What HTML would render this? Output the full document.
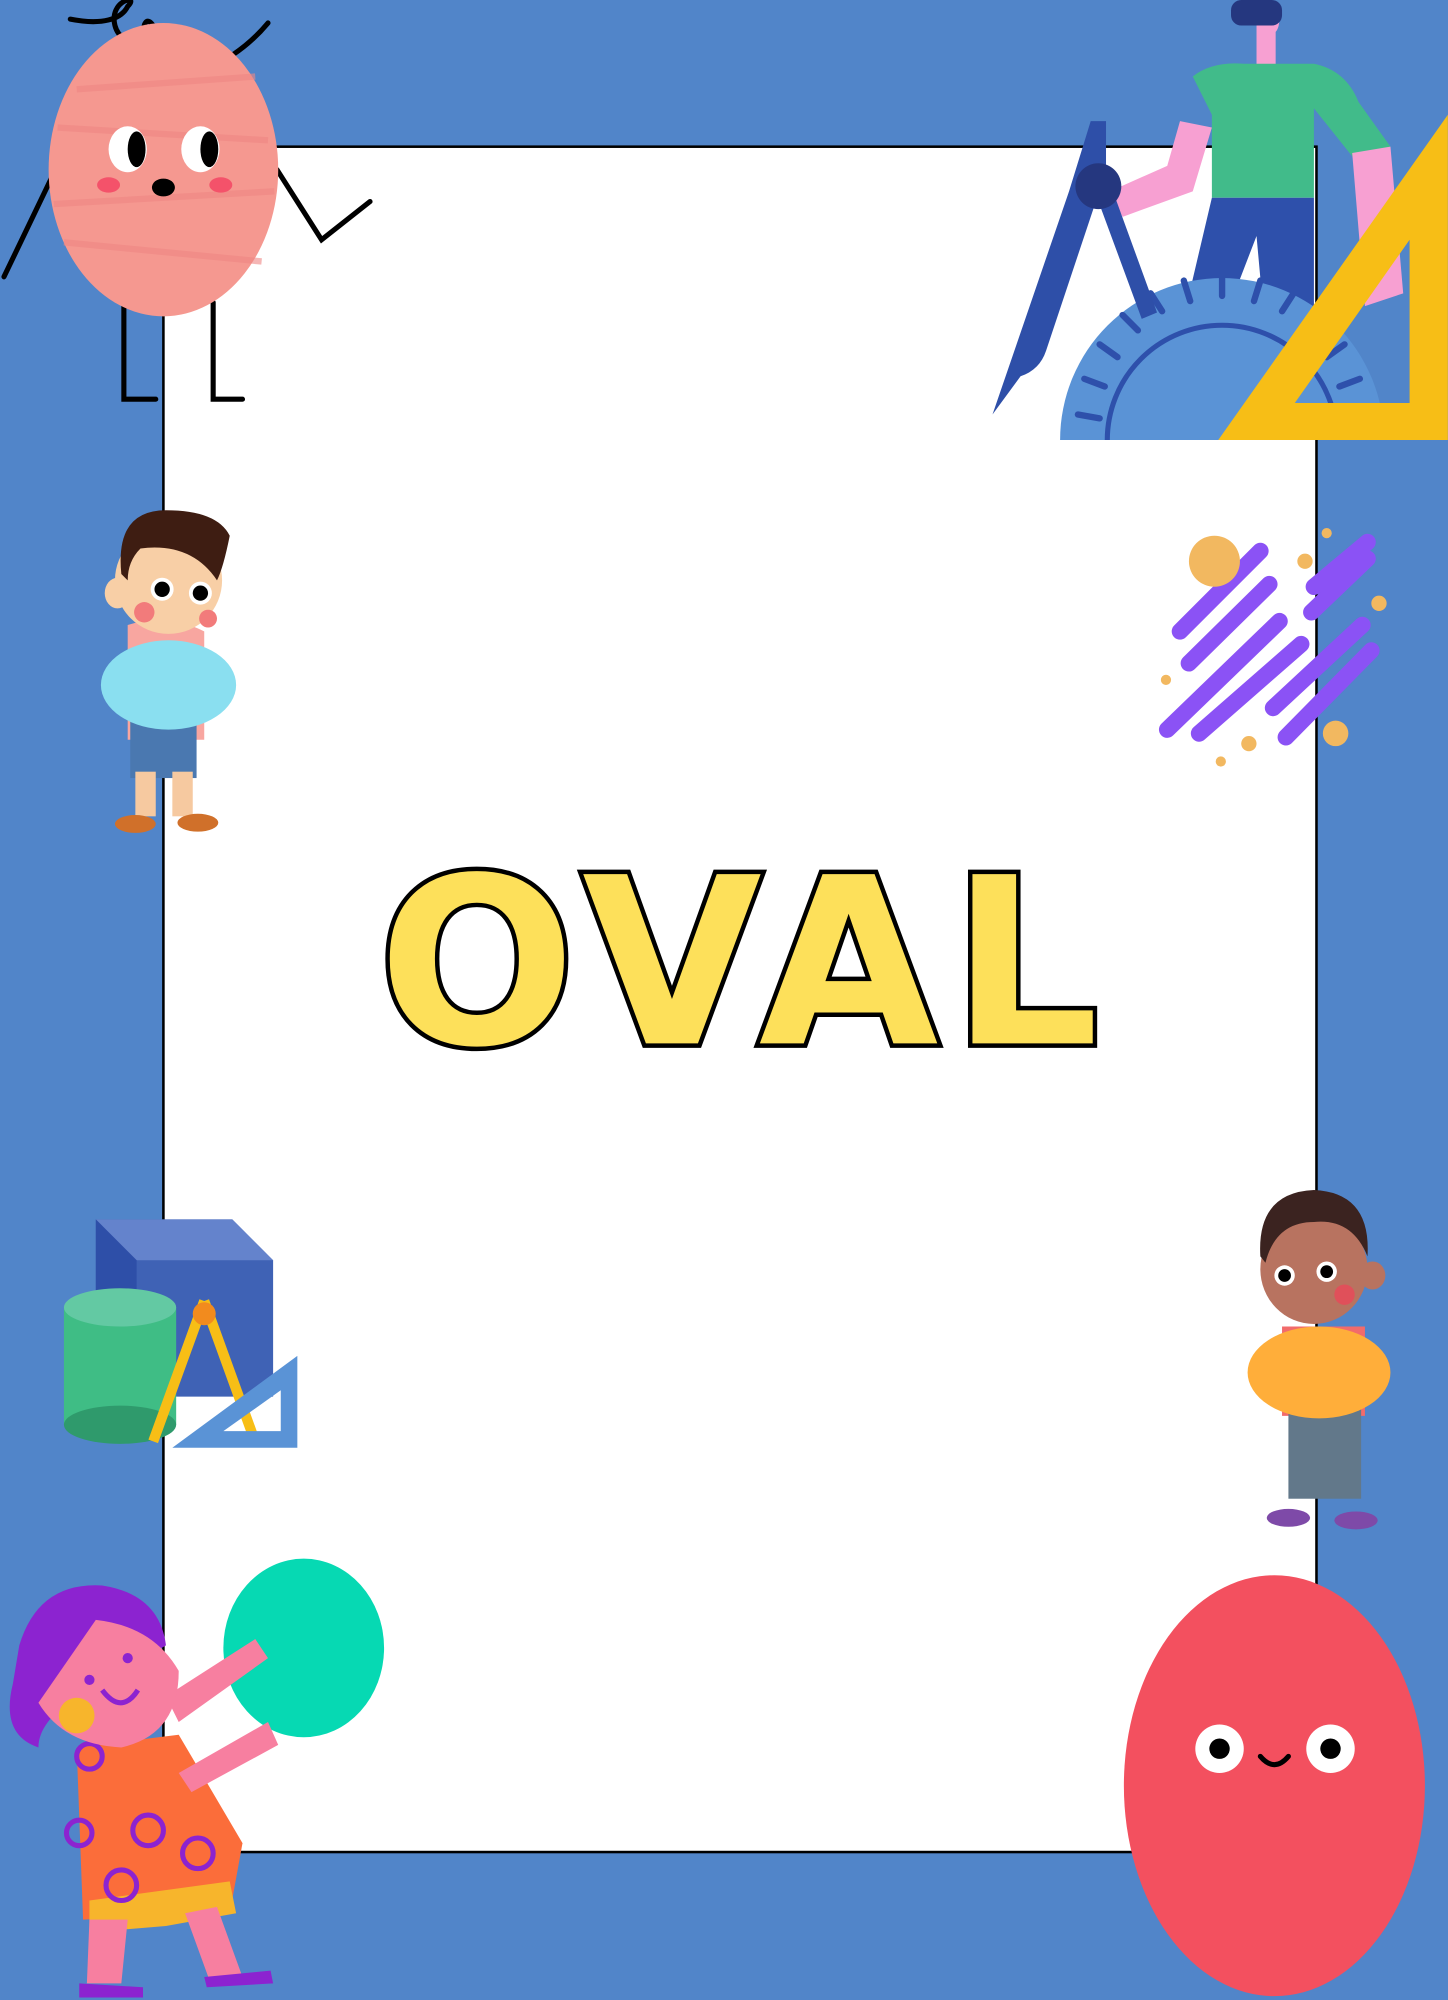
<!DOCTYPE html>
<html><head><meta charset="utf-8"><style>
html,body{margin:0;padding:0;background:#5185c9;}
svg{display:block;width:1448px;height:2000px;}
</style></head><body>
<svg viewBox="0 0 1135 1568" xmlns="http://www.w3.org/2000/svg">
<rect width="1135" height="1568" fill="#5185c9"/>
<rect x="128" y="115" width="904" height="1337" fill="#fff" stroke="#000" stroke-width="2"/>

<g stroke="#000" stroke-width="4" fill="none" stroke-linecap="round">
<path d="M40 140 L3 217"/><path d="M217 133 L252 188 L290 158"/>
<path d="M97 237 V313 H122"/><path d="M167 237 V313 H190"/>
<path d="M55 15 C80 20 95 15 100 5 C110 -5 85 0 90 20 C95 40 130 40 120 20 C110 5 105 45 140 55 C170 60 200 30 210 18"/>
</g>
<ellipse cx="128" cy="133" rx="90" ry="115" fill="#f59890"/>
<g stroke="#ef8784" stroke-width="5" opacity=".6"><path d="M45 100 L210 110 M42 160 L215 150 M50 190 L205 205 M60 70 L200 60"/></g>
<ellipse cx="100" cy="117" rx="15" ry="18" fill="#fff"/><ellipse cx="157" cy="117" rx="15" ry="18" fill="#fff"/>
<ellipse cx="107" cy="117" rx="7" ry="14" fill="#000"/><ellipse cx="164" cy="117" rx="7" ry="14" fill="#000"/>
<ellipse cx="128" cy="147" rx="9" ry="7" fill="#000"/>
<ellipse cx="85" cy="145" rx="9" ry="6" fill="#f4526a"/><ellipse cx="173" cy="145" rx="9" ry="6" fill="#f4526a"/>

<path d="M985 0 C1005 0 1005 20 1000 25 L1000 55 L985 55 Z" fill="#f7a0d2"/>
<rect x="965" y="0" width="40" height="20" rx="8" fill="#25377f"/>
<path d="M935 60 Q950 48 975 50 L1030 50 Q1055 55 1065 80 L1090 115 L1070 135 L1030 85 L1030 155 L950 155 L950 90 Z" fill="#41bb8a"/>
<path d="M1060 120 L1090 115 L1100 230 L1070 240 Z" fill="#f7a0d2"/>
<path d="M925 95 L950 100 L935 150 L880 170 L870 150 L915 130 Z" fill="#f7a0d2"/>
<path d="M950 155 L1030 155 L1030 240 L990 240 L985 185 L960 250 L930 240 Z" fill="#2e50ab"/>
<path d="M831 345 A127 127 0 0 1 1085 345 Z" fill="#5a93d6"/>
<path d="M868 345 A90 90 0 0 1 1048 345" fill="none" stroke="#2e50ab" stroke-width="4"/>
<g stroke="#2e50ab" stroke-width="5" stroke-linecap="round"><path d="M845 325 L862 328 M850 297 L866 303 M862 270 L876 280 M880 247 L892 259 M902 230 L911 244 M928 220 L933 236 M958 216 L958 232 M988 220 L983 236 M1014 230 L1005 244 M1036 247 L1024 259 M1054 270 L1040 280 M1066 297 L1050 303"/></g>
<path d="M855 95 h12 v40 l40 110 l-12 5 l-35 -95 l-40 120 q-5 15 -20 20 l-22 30 l60 -175 Z" fill="#2e4fa8"/>
<circle cx="861" cy="146" r="18" fill="#25377f"/>
<path d="M955 345 L1135 90 L1135 345 Z M1015 316 L1105 316 L1105 188 Z" fill="#f7be16" fill-rule="evenodd"/>

<path d="M100 490 Q130 480 160 495 L160 580 L100 580 Z" fill="#f8a6a0"/>
<rect x="102" y="565" width="52" height="45" fill="#4a78b0"/>
<rect x="106" y="605" width="16" height="35" fill="#f6c9a0"/><rect x="135" y="605" width="16" height="35" fill="#f6c9a0"/>
<ellipse cx="106" cy="646" rx="16" ry="7" fill="#d0702a"/><ellipse cx="155" cy="645" rx="16" ry="7" fill="#d0702a"/>
<ellipse cx="132" cy="455" rx="42" ry="42" fill="#f8cfa6"/>
<ellipse cx="92" cy="465" rx="10" ry="12" fill="#f8cfa6"/>
<path d="M95 450 Q90 400 130 400 Q170 400 180 420 Q175 445 170 455 Q150 425 110 430 Q100 440 100 455 Z" fill="#3e1d12"/>
<circle cx="127" cy="462" r="9" fill="#fff"/><circle cx="157" cy="465" r="9" fill="#fff"/>
<circle cx="127" cy="462" r="6" fill="#000"/><circle cx="157" cy="465" r="6" fill="#000"/>
<circle cx="113" cy="480" r="8" fill="#f27b7b"/><circle cx="163" cy="485" r="7" fill="#f27b7b"/>
<ellipse cx="132" cy="537" rx="53" ry="35" fill="#8adff0"/>

<g stroke="#8b52f5" stroke-width="13" stroke-linecap="round">
<path d="M925 495 L988 432 M932 520 L995 458 M915 572 L1003 487 M940 575 L1020 505 M1008 578 L1075 510 M998 555 L1068 490 M1028 480 L1072 438 M1030 460 L1072 425"/>
</g>
<g fill="#f2b860"><circle cx="952" cy="440" r="20"/><circle cx="1023" cy="440" r="6"/><circle cx="1040" cy="418" r="4"/><circle cx="1081" cy="473" r="6"/><circle cx="1047" cy="575" r="10"/><circle cx="979" cy="583" r="6"/><circle cx="957" cy="597" r="4"/><circle cx="914" cy="533" r="4"/></g>

<text x="584" y="818" text-anchor="middle" font-family="DejaVu Sans, sans-serif" font-weight="bold" font-size="182" letter-spacing="10" fill="#fde05a" stroke="#000" stroke-width="7" paint-order="stroke" stroke-linejoin="miter">OVAL</text>

<path d="M75 956 L182 956 L214 988 L214 1095 L107 1095 L75 1063 Z" fill="#3f62b5"/>
<path d="M75 956 L182 956 L214 988 L107 988 Z" fill="#6483cc"/>
<path d="M75 956 L107 988 L107 1095 L75 1063 Z" fill="#2e4fa8"/>
<rect x="50" y="1025" width="88" height="92" fill="#3fbd85"/>
<ellipse cx="94" cy="1117" rx="44" ry="15" fill="#2f9a6c"/>
<ellipse cx="94" cy="1025" rx="44" ry="15" fill="#63c9a3"/>
<path d="M160 1020 L120 1130 M160 1020 L198 1125" stroke="#f7be16" stroke-width="8"/>
<circle cx="160" cy="1030" r="9" fill="#f28b1e"/>
<path d="M135 1135 L233 1063 L233 1135 Z M175 1122 L220 1122 L220 1090 Z" fill="#5a93d6" fill-rule="evenodd"/>

<path d="M1005 1040 L1070 1040 L1070 1110 L1005 1110 Z" fill="#f26b6b"/>
<rect x="1010" y="1100" width="57" height="75" fill="#62788a"/>
<ellipse cx="1010" cy="1190" rx="17" ry="7" fill="#7e4aa8"/><ellipse cx="1063" cy="1192" rx="17" ry="7" fill="#7e4aa8"/>
<ellipse cx="1030" cy="995" rx="42" ry="43" fill="#b87360"/>
<ellipse cx="1076" cy="1000" rx="10" ry="11" fill="#b87360"/>
<path d="M988 985 Q985 935 1030 933 Q1075 935 1072 985 Q1060 955 1030 958 Q1000 958 992 990 Z" fill="#3b2320"/>
<circle cx="1007" cy="1000" r="8" fill="#fff"/><circle cx="1040" cy="997" r="8" fill="#fff"/>
<circle cx="1007" cy="1000" r="5" fill="#000"/><circle cx="1040" cy="997" r="5" fill="#000"/>
<circle cx="1054" cy="1015" r="8" fill="#e0505a"/>
<ellipse cx="1034" cy="1076" rx="56" ry="36" fill="#ffae3a"/>

<ellipse cx="238" cy="1292" rx="63" ry="70" fill="#06d9b3"/>
<path d="M60 1370 L140 1360 L190 1445 L180 1500 L65 1505 Z" fill="#fb6d3a"/>
<path d="M70 1490 L180 1475 L185 1500 L130 1510 L70 1515 Z" fill="#f7b52c"/>
<path d="M70 1505 L100 1505 L95 1555 L68 1555 Z M145 1500 L170 1495 L190 1550 L165 1555 Z" fill="#f77fa0"/>
<path d="M62 1555 L112 1558 L112 1566 L62 1566 Z M160 1550 L212 1545 L214 1555 L162 1558 Z" fill="#8c23d0"/>
<path d="M130 1330 L200 1285 L210 1300 L140 1350 Z M140 1390 L210 1350 L218 1368 L150 1405 Z" fill="#f77fa0"/>
<g fill="none" stroke="#8c23d0" stroke-width="4"><circle cx="116" cy="1435" r="12"/><circle cx="155" cy="1453" r="12"/><circle cx="95" cy="1478" r="12"/><circle cx="62" cy="1437" r="10"/><circle cx="70" cy="1377" r="10"/></g>
<path d="M15 1290 Q30 1240 80 1243 Q125 1250 130 1290 L60 1330 Q30 1350 30 1370 Q0 1360 10 1320 Z" fill="#8c23d0"/>
<path d="M30 1335 L75 1270 Q120 1275 140 1310 Q140 1360 95 1370 Q50 1368 30 1335 Z" fill="#f77fa0"/>
<circle cx="60" cy="1345" r="14" fill="#f7b52c"/>
<path d="M80 1325 Q95 1345 108 1325" fill="none" stroke="#8c23d0" stroke-width="4"/>
<circle cx="70" cy="1317" r="4" fill="#8c23d0"/><circle cx="100" cy="1300" r="4" fill="#8c23d0"/>

<ellipse cx="999" cy="1400" rx="118" ry="165" fill="#f3505f"/>
<circle cx="956" cy="1371" r="19" fill="#fff"/><circle cx="1043" cy="1371" r="19" fill="#fff"/>
<circle cx="956" cy="1371" r="8" fill="#000"/><circle cx="1043" cy="1371" r="8" fill="#000"/>
<path d="M988 1377 Q999 1390 1010 1377" fill="none" stroke="#000" stroke-width="4" stroke-linecap="round"/>
</svg>
</body></html>
